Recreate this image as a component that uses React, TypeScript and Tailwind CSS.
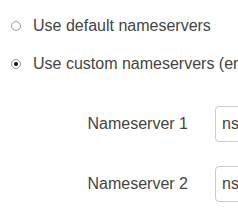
import React from 'react';

const Radio = ({ checked }: { checked?: boolean }) => (
  <span className="w-[10px] h-[10px] rounded-full border border-[#9a9a9a] bg-white flex items-center justify-center flex-shrink-0">
    {checked && <span className="w-[4px] h-[4px] rounded-full bg-[#111]" />}
  </span>
);

const servers = ['ns1.example.com', 'ns2.example.com'];

export default function App() {
  return (
    <div
      className="w-[238px] h-[211px] overflow-hidden bg-white text-[#444] text-[16px] whitespace-nowrap"
      style={{ fontFamily: '"Liberation Sans", Arial, sans-serif' }}
    >
      {/* radios */}
      <div className="pt-[16px] pl-[11px] flex flex-col gap-[18px]">
        <label className="flex items-center gap-[12px] h-[20px] leading-[20px]">
          <Radio />
          <span>Use default nameservers</span>
        </label>
        <label className="flex items-center gap-[12px] h-[20px] leading-[20px]">
          <Radio checked />
          <span>Use custom nameservers (enter below)</span>
        </label>
      </div>

      {/* nameserver inputs */}
      <div className="mt-[32px] flex flex-col gap-[24px]">
        {servers.map((ns, i) => (
          <div key={ns} className="flex items-center">
            <span className="w-[188px] text-right flex-shrink-0">Nameserver {i + 1}</span>
            <span className="ml-[27px] h-[36px] w-[220px] flex-shrink-0 flex items-center px-[6px] border border-[#ccc] rounded-[4px]">
              {ns}
            </span>
          </div>
        ))}
      </div>
    </div>
  );
}
